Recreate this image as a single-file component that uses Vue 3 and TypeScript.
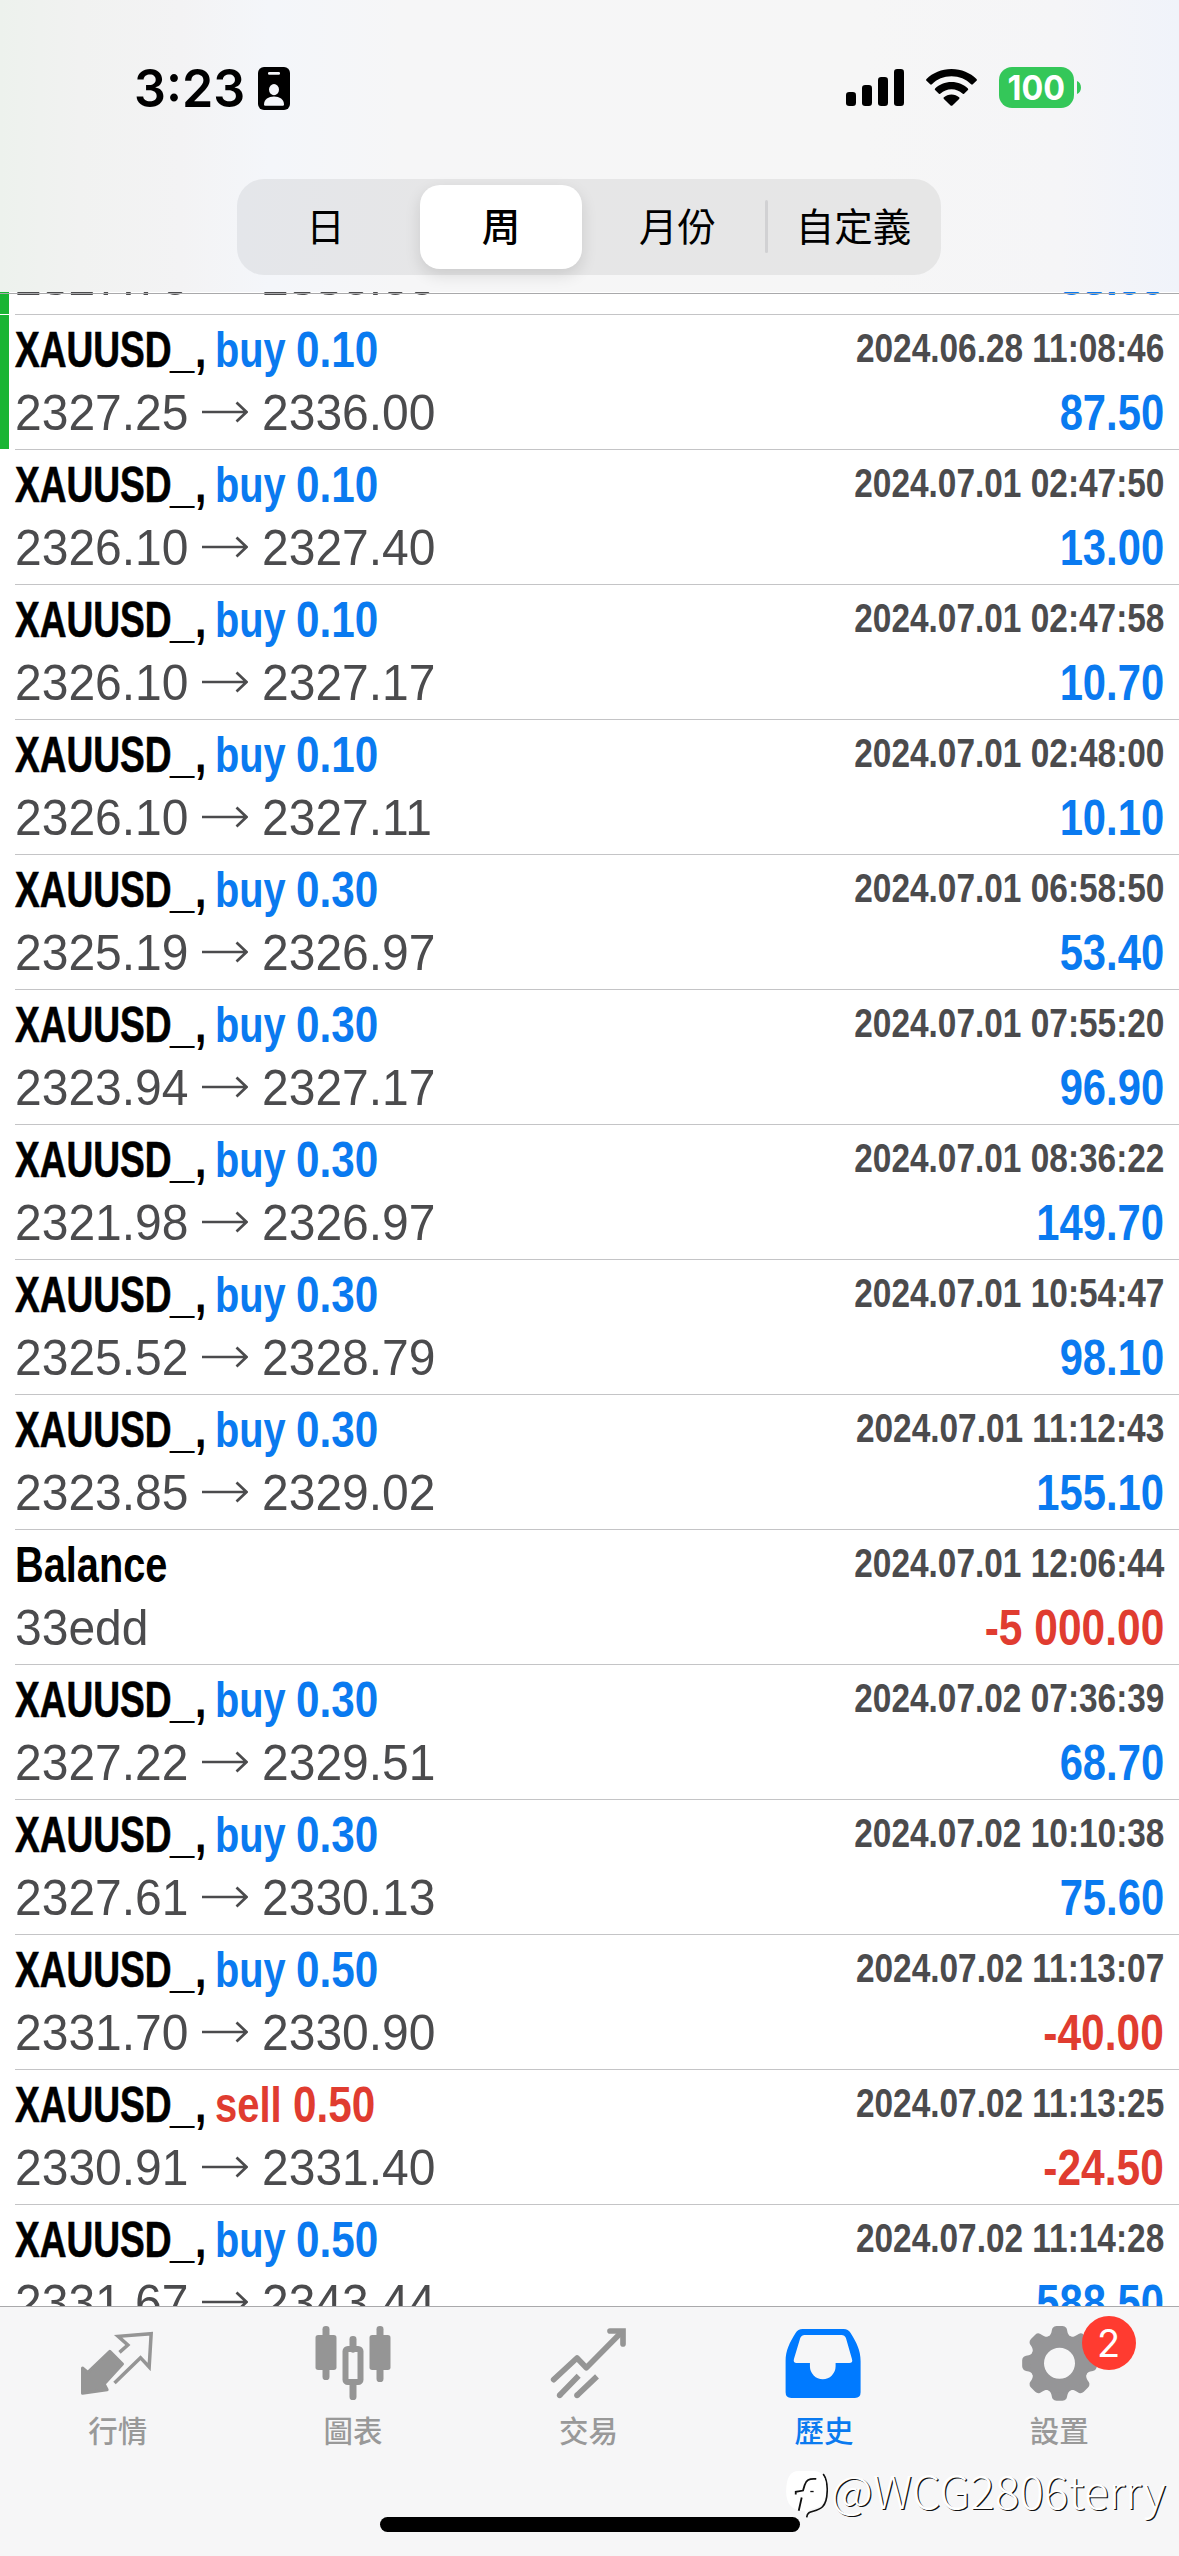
<script setup lang="ts">
interface Deal {
  symbol?: string
  side?: 'buy' | 'sell'
  volume?: string
  from: string
  to?: string
  time?: string
  profit: string
  marked?: boolean
}

const x = 'XAUUSD'

const deals: Deal[] = [
  { from: '2327.70', to: '2336.00', profit: '83.00', marked: true },
  { symbol: x, side: 'buy', volume: '0.10', from: '2327.25', to: '2336.00', time: '2024.06.28 11:08:46', profit: '87.50', marked: true },
  { symbol: x, side: 'buy', volume: '0.10', from: '2326.10', to: '2327.40', time: '2024.07.01 02:47:50', profit: '13.00' },
  { symbol: x, side: 'buy', volume: '0.10', from: '2326.10', to: '2327.17', time: '2024.07.01 02:47:58', profit: '10.70' },
  { symbol: x, side: 'buy', volume: '0.10', from: '2326.10', to: '2327.11', time: '2024.07.01 02:48:00', profit: '10.10' },
  { symbol: x, side: 'buy', volume: '0.30', from: '2325.19', to: '2326.97', time: '2024.07.01 06:58:50', profit: '53.40' },
  { symbol: x, side: 'buy', volume: '0.30', from: '2323.94', to: '2327.17', time: '2024.07.01 07:55:20', profit: '96.90' },
  { symbol: x, side: 'buy', volume: '0.30', from: '2321.98', to: '2326.97', time: '2024.07.01 08:36:22', profit: '149.70' },
  { symbol: x, side: 'buy', volume: '0.30', from: '2325.52', to: '2328.79', time: '2024.07.01 10:54:47', profit: '98.10' },
  { symbol: x, side: 'buy', volume: '0.30', from: '2323.85', to: '2329.02', time: '2024.07.01 11:12:43', profit: '155.10' },
  { symbol: 'Balance', from: '33edd', time: '2024.07.01 12:06:44', profit: '-5 000.00' },
  { symbol: x, side: 'buy', volume: '0.30', from: '2327.22', to: '2329.51', time: '2024.07.02 07:36:39', profit: '68.70' },
  { symbol: x, side: 'buy', volume: '0.30', from: '2327.61', to: '2330.13', time: '2024.07.02 10:10:38', profit: '75.60' },
  { symbol: x, side: 'buy', volume: '0.50', from: '2331.70', to: '2330.90', time: '2024.07.02 11:13:07', profit: '-40.00' },
  { symbol: x, side: 'sell', volume: '0.50', from: '2330.91', to: '2331.40', time: '2024.07.02 11:13:25', profit: '-24.50' },
  { symbol: x, side: 'buy', volume: '0.50', from: '2331.67', to: '2343.44', time: '2024.07.02 11:14:28', profit: '588.50' },
]

const periods = ['日', '周', '月份', '自定義']
const teeth = [0, 45, 90, 135, 180, 225, 270, 315]
</script>

<template>
  <div class="screen">
    <header class="header">
      <div class="status">
        <span class="clock"><span>3:23</span></span>
        <svg class="idcard" viewBox="0 0 32 43">
          <rect width="32" height="43" rx="6" />
          <rect x="10" y="5" width="12" height="2.8" rx="1.2" fill="#f4f6fa" />
          <ellipse cx="16" cy="22.6" rx="5" ry="5.6" fill="#f4f6fa" />
          <path d="M6 37.5C6 32.5 10.500 29.600 16 29.600S26 32.500 26 37.500Q26 38.700 24.800 38.700H7.200Q6 38.700 6 37.500Z" fill="#f4f6fa" />
        </svg>
        <svg class="signal" viewBox="0 0 58 37">
          <rect x="0" y="23" width="10" height="14" rx="3.2" />
          <rect x="16" y="16" width="10" height="21" rx="3.2" />
          <rect x="32" y="8" width="10" height="29" rx="3.200" />
          <rect x="48" y="0" width="10" height="37" rx="3.200" />
        </svg>
        <svg class="wifi" viewBox="0 0 51 37">
          <path d="M25.500 0C35.500 0 44.300 3.900 50.500 10Q51.300 10.900 50.500 11.700L46.800 15.300Q46 16 45.100 15.200C40 10.300 33.200 7.300 25.500 7.300S11 10.300 5.900 15.200Q5 16 4.200 15.300L.5 11.700Q-.3 10.900.5 10C6.700 3.900 15.500 0 25.500 0Z" />
          <path d="M25.500 12.900C32 12.900 37.800 15.400 41.900 19.400Q42.700 20.200 41.900 21L38.100 24.700Q37.300 25.400 36.400 24.600C33.600 21.900 29.800 20.300 25.500 20.300S17.400 21.900 14.600 24.600Q13.700 25.400 12.900 24.700L9.100 21Q8.300 20.200 9.100 19.400C13.200 15.400 19 12.900 25.500 12.900Z" />
          <path d="M25.500 25.400C28.500 25.400 31.200 26.500 33.100 28.300Q33.900 29.100 33.100 29.900L26.400 36.500Q25.500 37.200 24.600 36.500L17.900 29.900Q17.100 29.100 17.900 28.300C19.800 26.500 22.500 25.400 25.500 25.400Z" />
        </svg>
        <div class="battery"><span>100</span></div>
        <svg class="nub" viewBox="0 0 4 13"><path d="M0 0C5.300 2 5.300 11 0 13Z" fill="#34c759" /></svg>
      </div>
      <div class="segments">
        <div v-for="(p, i) in periods" :key="p" class="segment" :class="{ on: i === 1, split: i === 3 }">{{ p }}</div>
      </div>
    </header>

    <main class="list">
      <div class="rows">
        <article v-for="(d, i) in deals" :key="i" class="deal" :class="{ marked: d.marked }">
          <div class="body">
            <div class="line first">
              <template v-if="d.side">
                <span class="box symbol"><b>{{ d.symbol }}</b></span>
                <span class="box underscore"><b>_</b></span>
                <span class="box comma"><b>,</b></span>
                <span class="box action" :class="d.side"><b>{{ d.side }}</b></span>
                <span class="box volume" :class="d.side"><b>{{ d.volume }}</b></span>
              </template>
              <span v-else-if="d.symbol" class="box balance"><b>{{ d.symbol }}</b></span>
              <time v-if="d.time" class="time">{{ d.time }}</time>
            </div>
            <div class="line second">
              <span class="box price"><i>{{ d.from }}</i></span>
              <template v-if="d.to">
                <svg class="arrow" viewBox="0 0 46 22">
                  <path d="M0 11H44M34.500 1.500L44.500 11L34.500 20.500" fill="none" stroke="#4b4b4d" stroke-width="2.700" />
                </svg>
                <span class="box price"><i>{{ d.to }}</i></span>
              </template>
              <span class="profit" :class="d.profit.startsWith('-') ? 'sell' : 'buy'">{{ d.profit }}</span>
            </div>
          </div>
        </article>
      </div>
    </main>

    <footer class="footer">
      <nav class="tabs">
        <div class="tab">
          <svg viewBox="240.500 138 225 225">
            <path d="M330 214L368 252L313 312L322 329L248 340V264L264 277Z" fill="#959595" stroke="#959595" stroke-width="9" stroke-linejoin="round" />
            <path d="M359 217L384 195L355 169L454 161L448 261L422 233L344 309" fill="none" stroke="#959595" stroke-width="10.500" stroke-linecap="butt" />
          </svg>
          <span>行情</span>
        </div>
        <div class="tab">
          <svg viewBox="946.500 138 225 225" fill="#959595">
            <rect x="966" y="138" width="21" height="162" rx="10" />
            <rect x="945" y="165" width="63" height="105" rx="8" />
            <rect x="1128" y="138" width="21" height="168" rx="10" />
            <rect x="1107" y="165" width="63" height="105" rx="8" />
            <rect x="1047" y="168" width="21" height="50" rx="10" />
            <rect x="1047" y="298" width="21" height="62" rx="10" />
            <rect x="1035" y="207" width="45" height="99" rx="7" fill="none" stroke="#959595" stroke-width="18" />
          </svg>
          <span>圖表</span>
        </div>
        <div class="tab">
          <svg viewBox="483 138 225 225" fill="none" stroke="#959595" stroke-width="17">
            <path d="M491 299L561 234L589 263L695 156" stroke-linecap="round" stroke-linejoin="round" />
            <path d="M660 153H699V192" stroke-linecap="round" />
            <path d="M566 287L509 346M621 289L561 346" />
            <circle cx="509" cy="346" r="8.500" fill="#959595" stroke="none" />
            <circle cx="561" cy="346" r="8.500" fill="#959595" stroke="none" />
          </svg>
          <span>交易</span>
        </div>
        <div class="tab active">
          <svg viewBox="22.200 138 225 225">
            <path fill-rule="evenodd" fill="#007aff" d="M72 147H195Q209 147 216 159C234 188 246 211 246 244V337Q246 354 229 354H38Q21 354 21 337V244C21 211 33 188 51 159Q58 147 72 147ZM78 165Q69 165 65 174L46 237Q43 249 54 249H94V259A38.500 38.500 0 0 0 171 259V249H212Q224 249 220 237L202 174Q198 165 189 165Z" />
          </svg>
          <span>歷史</span>
        </div>
        <div class="tab">
          <svg viewBox="728.500 138 225 225">
            <g fill="#959597">
              <path v-for="a in teeth" :key="a" :transform="`rotate(${a} 841 250)`" d="M800 174C822 164 815 151 821 143Q825 138 832 138H850Q857 138 861 143C867 151 860 164 882 174Z" />
            </g>
            <circle cx="841" cy="250" r="67" fill="none" stroke="#959597" stroke-width="41" />
          </svg>
          <span>設置</span>
          <div class="badge">2</div>
        </div>
      </nav>
      <div class="home"></div>
      <div class="watermark">
        <svg viewBox="0 0 126 145">
          <path d="M112 9C121 22 124 38 124 57C124 82 120 98 110 108C98 120 78 121 69 126Q63 130 62 140" fill="none" stroke="#111" stroke-width="5" />
          <path d="M38 0H86Q121 4 121 54Q121 102 92 110C72 115 62 120 58 134L56 120C22 120 0 104 0 61Q0 0 38 0Z" fill="#fff" />
          <path d="M91 24C68 22 60 28 56 42L51 59L29 63V71M47 80L38 120" fill="none" stroke="#111" stroke-width="5.500" />
          <path d="M73 62H83" fill="none" stroke="#111" stroke-width="4" />
        </svg>
        <span>@WCG2806terry</span>
      </div>
    </footer>
  </div>
</template>

<style>
body {
  margin: 0;
  background: #fff;
}
</style>

<style scoped>
.screen {
  position: relative;
  display: flex;
  flex-direction: column;
  width: 1179px;
  height: 2556px;
  overflow: hidden;
  background: #fff;
  font-family: "Liberation Sans", "Noto Sans CJK TC", sans-serif;
}
.header {
  flex: none;
  height: 292px;
  background: linear-gradient(90deg, #edf2ed 0, #f1f2f1 80px, #f3f3f4 180px, #f4f6fa 270px, #f6f6f7 400px, #f6f6f6 860px, #f5f5f7 1060px, #f0f3fa 1179px);
}
.status {
  display: flex;
  align-items: flex-start;
  box-sizing: border-box;
  height: 112px;
  padding-top: 67px;
}
.clock {
  flex: none;
  width: 107px;
  margin-left: 134px;
  margin-right: 17px;
  font: 600 52px/43px Inter, sans-serif;
  color: #000;
}
.clock span {
  display: inline-block;
  transform: scaleX(.965);
  transform-origin: 0 50%;
}
.idcard { width: 32px; height: 43px; }
.signal { width: 58px; height: 37px; margin: 2px 0 0 556px; }
.wifi { width: 51px; height: 37px; margin: 2px 0 0 22px; }
.battery {
  width: 75px;
  height: 41px;
  margin-left: 22px;
  border-radius: 13px;
  background: #34c759;
  color: #fff;
  font: 700 34px/41px Inter, sans-serif;
  text-align: center;
}
.battery span {
  display: inline-block;
  transform: scaleX(.95);
}
.nub { width: 4px; height: 13px; margin: 14px 0 0 3px; }
.segments {
  display: flex;
  width: 704px;
  height: 96px;
  margin: 67px 0 0 237px;
  border-radius: 27px;
  background: linear-gradient(90deg, #e4e6ea, #e6e6e7 200px, #e6e6e6);
}
.segment {
  position: relative;
  flex: 1;
  box-sizing: border-box;
  padding-left: 1px;
  font: 400 38.500px/91px "Noto Sans CJK TC", sans-serif;
  text-align: center;
  color: #000;
}
.segment.on {
  flex: none;
  width: 162px;
  height: 84px;
  margin: 6px 7px;
  padding: 0;
  line-height: 79px;
  border-radius: 20px;
  background: #fff;
  font-weight: 500;
  box-shadow: 0 6px 16px rgba(0, 0, 0, .12);
}
.segment.split::before {
  content: "";
  position: absolute;
  left: 0;
  top: 21px;
  width: 3px;
  height: 53px;
  border-radius: 2px;
  background: #d1d1d3;
}
.list {
  position: relative;
  flex: none;
  height: 2015px;
  overflow: hidden;
}
.list::before {
  content: "";
  position: absolute;
  z-index: 1;
  left: 0;
  right: 0;
  top: 1px;
  height: 1px;
  background: #a9a9ab;
}
.rows { margin-top: -113px; }
.deal {
  display: flex;
  height: 135px;
  box-sizing: border-box;
  padding-left: 15px;
}
.deal.marked {
  background: linear-gradient(#19b534, #19b534) 0 1px / 9px 134px no-repeat;
}
.body {
  flex: 1;
  border-top: 1px solid #c4c4c6;
}
.line {
  display: flex;
  align-items: flex-start;
  font-size: 50px;
  white-space: nowrap;
}
.first { height: 60px; padding-top: 5px; line-height: 60px; }
.second { height: 66px; line-height: 66px; color: #4b4b4d; }
.box { flex: none; display: block; }
.box b, .box i {
  display: inline-block;
  font-style: normal;
  transform-origin: 0 50%;
}
.symbol { width: 155px; }
.symbol b { transform: scaleX(.742); -webkit-text-stroke: .6px #000; }
.underscore { width: 25px; }
.underscore b { transform: scaleX(.87); }
.comma { width: 20px; }
.comma b { transform: scaleX(.82); }
.action { width: 81px; }
.action b { transform: scaleX(.795); }
.action.sell b { transform: scaleX(.8); }
.action.sell { width: 78px; }
.volume b { transform: scaleX(.845); }
.balance b { transform: scaleX(.795); }
.price { width: 187px; }
.price i { transform: scaleX(.96); }
.arrow + .price { margin-left: 14px; }
.arrow { width: 46px; height: 22px; margin-top: 21px; }
.buy { color: #0a7af0; }
.sell { color: #e03c30; }
.time {
  margin-left: auto;
  padding-right: 15px;
  font-size: 40px;
  font-weight: 700;
  line-height: 57px;
  color: #4b4b4d;
  transform: scaleX(.835);
  transform-origin: calc(100% - 15px) 50%;
}
.profit {
  margin-left: auto;
  padding-right: 15px;
  font-weight: 700;
  transform: scaleX(.835);
  transform-origin: calc(100% - 15px) 50%;
}
.profit.sell { transform: scaleX(.85); }
.footer {
  position: relative;
  flex: 1;
  margin-top: -1px;
  border-top: 1px solid #a9a9ab;
  background: #f6f6f7;
}
.tabs {
  display: flex;
  padding: 19px 2px 0 0;
}
.tab {
  position: relative;
  flex: 1;
  display: flex;
  flex-direction: column;
  align-items: center;
  color: #999;
}
.tab svg { width: 75px; height: 75px; overflow: visible; }
.tab span {
  margin-top: 7px;
  font: 500 29.500px/42px "Noto Sans CJK TC", sans-serif;
}
.tab.active { color: #0a7af0; }
.badge {
  position: absolute;
  left: 140px;
  top: -10px;
  width: 54px;
  height: 54px;
  border-radius: 50%;
  background: #ff3b30;
  color: #fff;
  font: 400 38px/54px Inter, sans-serif;
  text-align: center;
}
.home {
  position: absolute;
  left: 380px;
  top: 210px;
  width: 420px;
  height: 15px;
  border-radius: 8px;
  background: #000;
}
.watermark {
  position: absolute;
  left: 786px;
  top: 164px;
  display: flex;
  align-items: flex-start;
}
.watermark svg { width: 42px; height: 48px; }
.watermark span {
  margin: -9px 0 0 3px;
  font: 300 45px/56px "Noto Sans CJK SC", sans-serif;
  color: #fff;
  text-shadow: 1.200px 1.200px .3px #111;
  transform: scaleX(1.02);
  transform-origin: 0 50%;
}
</style>
